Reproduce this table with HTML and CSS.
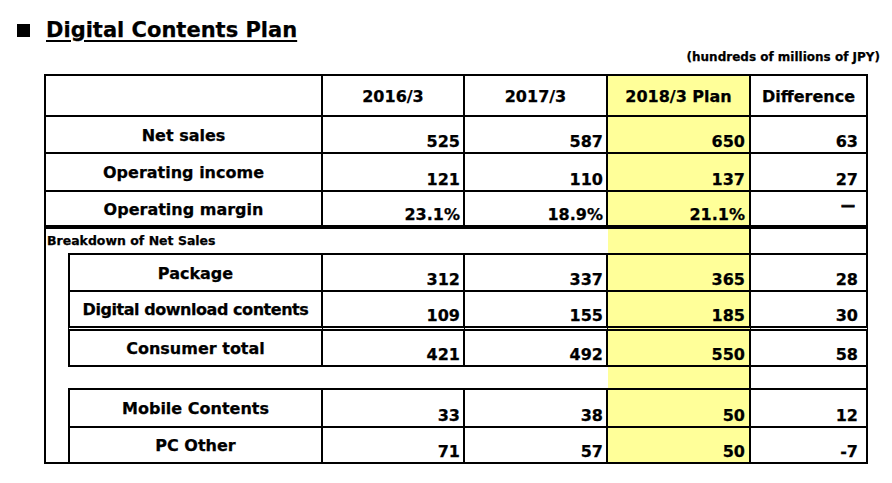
FILE: index.html
```html
<!DOCTYPE html>
<html lang="en">
<head>
<meta charset="utf-8">
<title>Digital Contents Plan</title>
<link rel="stylesheet" href="styles.css">
</head>
<body>
<div class="page">
  <h1 class="title"><span class="bullet"></span><span class="title-text">Digital Contents Plan</span></h1>
  <div class="unit">(hundreds of millions of JPY)</div>
  <div class="sheet">
    <div class="cell lbl-wide"></div>
    <div class="cell head">2016/3</div>
    <div class="cell head">2017/3</div>
    <div class="cell head plan">2018/3 Plan</div>
    <div class="cell head">Difference</div>

    <div class="cell lbl-wide">Net sales</div>
    <div class="cell num">525</div>
    <div class="cell num">587</div>
    <div class="cell num plan">650</div>
    <div class="cell num diff">63</div>

    <div class="cell lbl-wide">Operating income</div>
    <div class="cell num">121</div>
    <div class="cell num">110</div>
    <div class="cell num plan">137</div>
    <div class="cell num diff">27</div>

    <div class="cell lbl-wide thick">Operating margin</div>
    <div class="cell num thick">23.1%</div>
    <div class="cell num thick">18.9%</div>
    <div class="cell num plan thick">21.1%</div>
    <div class="cell num diff thick dash">—</div>

    <div class="breakdown">Breakdown of Net Sales</div>
    <div class="cell open"></div>
    <div class="cell open"></div>
    <div class="cell plan"></div>
    <div class="cell"></div>

    <div class="indent"></div>

    <div class="cell lbl">Package</div>
    <div class="cell num">312</div>
    <div class="cell num">337</div>
    <div class="cell num plan">365</div>
    <div class="cell num diff">28</div>

    <div class="cell lbl dbl tight">Digital download contents</div>
    <div class="cell num dbl">109</div>
    <div class="cell num dbl">155</div>
    <div class="cell num plan dbl">185</div>
    <div class="cell num diff dbl">30</div>

    <div class="cell lbl">Consumer total</div>
    <div class="cell num">421</div>
    <div class="cell num">492</div>
    <div class="cell num plan">550</div>
    <div class="cell num diff">58</div>

    <div class="cell lbl open"></div>
    <div class="cell open"></div>
    <div class="cell open"></div>
    <div class="cell plan"></div>
    <div class="cell"></div>

    <div class="cell lbl">Mobile Contents</div>
    <div class="cell num">33</div>
    <div class="cell num">38</div>
    <div class="cell num plan">50</div>
    <div class="cell num diff">12</div>

    <div class="cell lbl">PC Other</div>
    <div class="cell num">71</div>
    <div class="cell num">57</div>
    <div class="cell num plan">50</div>
    <div class="cell num diff">-7</div>
  </div>
</div>
</body>
</html>
```
FILE: styles.css
```css
* {
  box-sizing: border-box;
}

html, body {
  margin: 0;
  padding: 0;
  background: #fff;
}

body {
  font-family: "DejaVu Sans", Verdana, sans-serif;
  font-weight: bold;
  color: #000;
  -webkit-text-stroke: 0.25px #000;
}

.page {
  width: 892px;
  padding-top: 18px;
}

.title {
  margin: 0;
  padding-left: 17px;
  display: flex;
  align-items: center;
  gap: 16px;
  font-size: 21px;
  line-height: 24px;
  font-weight: bold;
}

.bullet {
  display: block;
  width: 13px;
  height: 13px;
  background: #000;
  margin-top: 1px;
}

.title-text {
  text-decoration: underline;
  text-decoration-thickness: 2px;
  text-underline-offset: 3px;
}

.unit {
  margin-top: 8px;
  padding-right: 12px;
  text-align: right;
  font-size: 12px;
  line-height: 14px;
}

.sheet {
  margin-top: 10px;
  margin-left: 44px;
  width: 824px;
  display: grid;
  grid-template-columns: 22px 255px 142px 143px 143px 117px;
  grid-template-rows: 41px 37px 38px 37px 26px 37px 39px 36px 23px 38px 36px;
  border-top: 2px solid #000;
  border-left: 2px solid #000;
  font-size: 16px;
  line-height: 20px;
}

.cell {
  border-right: 2px solid #000;
  border-bottom: 2px solid #000;
  display: flex;
  white-space: nowrap;
}

.lbl-wide {
  grid-column: 1 / 3;
  justify-content: center;
  align-items: center;
  padding-top: 2px;
}

.lbl {
  grid-column: 2;
  border-left: 2px solid #000;
  justify-content: center;
  align-items: center;
  padding-top: 2px;
}

.tight {
  letter-spacing: -0.45px;
}

.head {
  justify-content: center;
  align-items: center;
  padding-top: 2px;
}

.num {
  justify-content: flex-end;
  align-items: flex-end;
  padding-right: 3px;
}

.num.plan {
  padding-right: 4px;
}

.num.diff {
  padding-right: 8px;
}

.plan {
  background: #ffff99;
}

.thick {
  border-bottom-width: 4px;
}

.dbl {
  border-bottom: 5px double #000;
}

.num.dash {
  font-size: 14px;
  padding-right: 11px;
  padding-bottom: 10px;
  -webkit-text-stroke: 0.8px #000;
}

.open {
  border-right: 0;
}

.lbl.open {
  border-left: 0;
}

.breakdown {
  grid-column: 1 / 3;
  grid-row: 5;
  padding: 5px 0 0 1px;
  font-size: 12.5px;
  line-height: 14px;
  white-space: nowrap;
  background: linear-gradient(#000, #000) 22px 100% / calc(100% - 22px) 2px no-repeat;
}

.indent {
  grid-column: 1;
  grid-row: 6 / 12;
  border-bottom: 2px solid #000;
}
```
